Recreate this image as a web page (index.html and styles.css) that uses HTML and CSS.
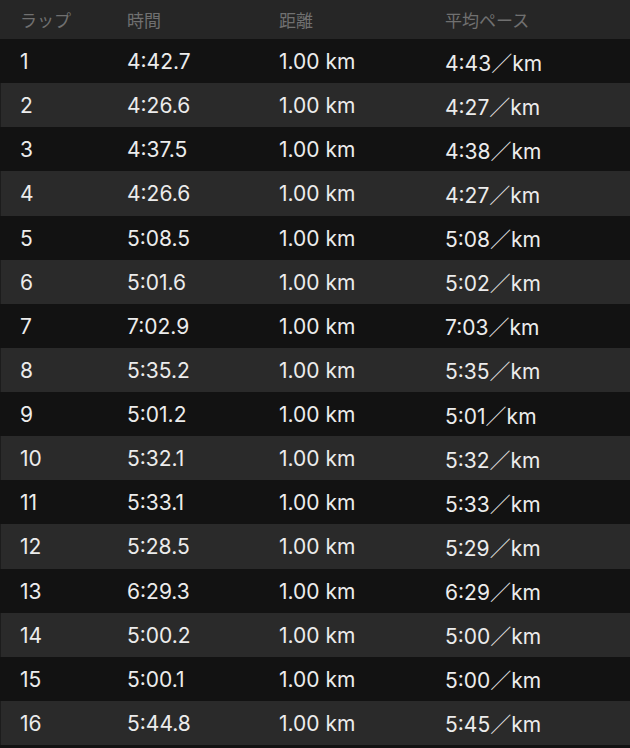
FILE: index.html
```html
<!DOCTYPE html>
<html lang="ja">
<head>
<meta charset="utf-8">
<link rel="stylesheet" href="styles.css">
</head>
<body>
<div class="laps">
  <div class="row head"><span>ラップ</span><span>時間</span><span>距離</span><span>平均ペース</span></div>
  <div class="row"><span>1</span><span>4:42.7</span><span>1.00 km</span><span>4:43／km</span></div>
  <div class="row"><span>2</span><span>4:26.6</span><span>1.00 km</span><span>4:27／km</span></div>
  <div class="row"><span>3</span><span>4:37.5</span><span>1.00 km</span><span>4:38／km</span></div>
  <div class="row"><span>4</span><span>4:26.6</span><span>1.00 km</span><span>4:27／km</span></div>
  <div class="row"><span>5</span><span>5:08.5</span><span>1.00 km</span><span>5:08／km</span></div>
  <div class="row"><span>6</span><span>5:01.6</span><span>1.00 km</span><span>5:02／km</span></div>
  <div class="row"><span>7</span><span>7:02.9</span><span>1.00 km</span><span>7:03／km</span></div>
  <div class="row"><span>8</span><span>5:35.2</span><span>1.00 km</span><span>5:35／km</span></div>
  <div class="row"><span>9</span><span>5:01.2</span><span>1.00 km</span><span>5:01／km</span></div>
  <div class="row"><span>10</span><span>5:32.1</span><span>1.00 km</span><span>5:32／km</span></div>
  <div class="row"><span>11</span><span>5:33.1</span><span>1.00 km</span><span>5:33／km</span></div>
  <div class="row"><span>12</span><span>5:28.5</span><span>1.00 km</span><span>5:29／km</span></div>
  <div class="row"><span>13</span><span>6:29.3</span><span>1.00 km</span><span>6:29／km</span></div>
  <div class="row"><span>14</span><span>5:00.2</span><span>1.00 km</span><span>5:00／km</span></div>
  <div class="row"><span>15</span><span>5:00.1</span><span>1.00 km</span><span>5:00／km</span></div>
  <div class="row"><span>16</span><span>5:44.8</span><span>1.00 km</span><span>5:45／km</span></div>
</div>
</body>
</html>
```
FILE: styles.css
```css
html, body {
  margin: 0;
  padding: 0;
  background: #121212;
}
body {
  width: 630px;
  height: 748px;
  overflow: hidden;
  font-family: "Inter", "Noto Sans CJK JP", sans-serif;
}
.laps {
  display: flex;
  flex-direction: column;
}
.row {
  display: grid;
  grid-template-columns: 107px 152px 166px 1fr;
  align-items: center;
  padding-left: 20px;
  padding-top: 1px;
  box-sizing: border-box;
  height: 44.125px;
  font-size: 21px;
  color: #ececec;
  background: #121212;
}
.row:nth-child(odd) {
  background: #2a2a2a;
  box-shadow: inset 1px 0 0 #1c1c1c;
}
.row.head {
  height: 39px;
  padding-top: 0;
  font-size: 17px;
  color: #707070;
  background: #262626;
  box-shadow: none;
}
```
